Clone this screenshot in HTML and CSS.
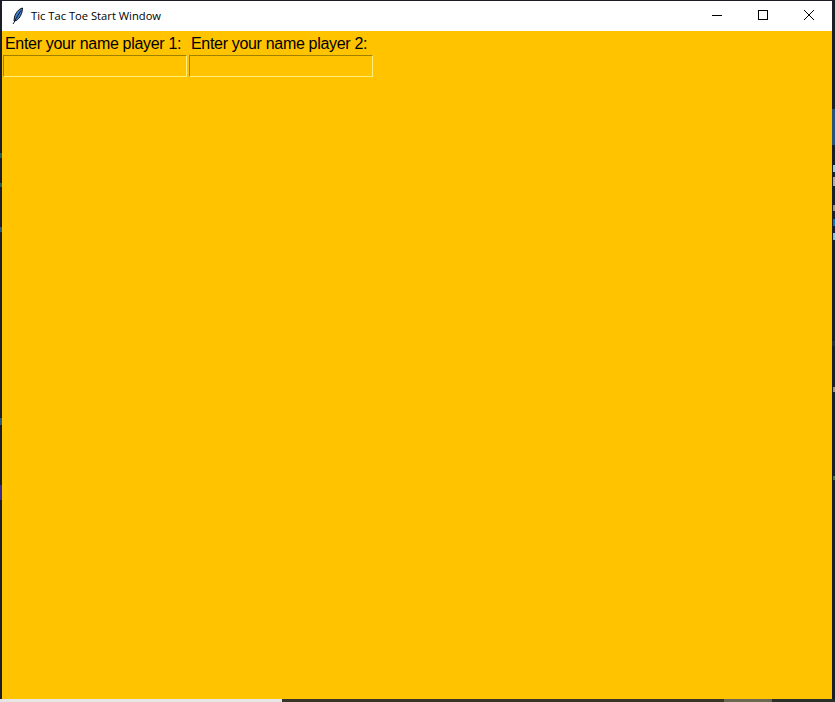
FILE: index.html
```html
<!DOCTYPE html>
<html lang="en">
<head>
  <meta charset="UTF-8">
  <title>Tic Tac Toe Start Window</title>
  <link rel="stylesheet" href="styles.css">
</head>
<body>

<div class="window">
  <div class="titlebar">
    <svg class="feather" width="16" height="18" viewBox="0 0 16 18">
      <path d="M12.5 1 C8.5 2 5.5 6 4.5 10 L4 14 L6.5 13.5 C10 11 12.5 6 12.5 1 Z" fill="#3f7fd0" stroke="#10131c" stroke-width="1"/>
      <path d="M11 3.5 C9 6.5 6.5 10.5 4 15.5 L3 17" fill="none" stroke="#10131c" stroke-width="1"/>
    </svg>
    <span class="title">Tic Tac Toe Start Window</span>
    <div class="controls">
      <svg class="control" width="46" height="30" viewBox="0 0 46 30">
        <path d="M18 14.5 H28" stroke="#000" stroke-width="1"/>
      </svg>
      <svg class="control" width="46" height="30" viewBox="0 0 46 30">
        <rect x="18.5" y="9.5" width="9" height="9" fill="none" stroke="#000" stroke-width="1"/>
      </svg>
      <svg class="control" width="46" height="30" viewBox="0 0 46 30">
        <path d="M18 9 L28 19 M28 9 L18 19" stroke="#000" stroke-width="1"/>
      </svg>
    </div>
  </div>

  <div class="content">
    <div class="field">
      <label class="name-label" for="player1">Enter your name player 1:</label>
      <input class="name-entry" id="player1" type="text">
    </div>
    <div class="field">
      <label class="name-label" for="player2">Enter your name player 2:</label>
      <input class="name-entry" id="player2" type="text">
    </div>
  </div>
</div>

<div class="taskstrip">
  <div class="strip-light"></div>
  <div class="strip-dark"></div>
  <div class="strip-thumb"></div>
  <div class="strip-end"></div>
</div>

</body>
</html>
```

FILE: styles.css
```css
html, body {
  height: 100%;
}
body {
  margin: 0;
  background-color: #1b1e26;
  /* bits of the desktop showing past the window edges */
  background-image:
    linear-gradient(#2d5278, #2d5278),
    linear-gradient(#9cc8e0, #9cc8e0),
    linear-gradient(#b8a8a0, #b8a8a0),
    linear-gradient(#a89878, #a89878),
    linear-gradient(#1d6fa8, #1d6fa8),
    linear-gradient(#8cc0d8, #8cc0d8),
    linear-gradient(#2a2d33, #2a2d33),
    linear-gradient(#a89878, #a89878),
    linear-gradient(#4a7a40, #4a7a40),
    linear-gradient(#1f5a5a, #1f5a5a),
    linear-gradient(#1f5a5a, #1f5a5a),
    linear-gradient(#28587c, #28587c),
    linear-gradient(#28587c, #28587c),
    linear-gradient(#3a2a90, #3a2a90);
  background-repeat: no-repeat;
  background-size:
    3px 36px, 2px 7px, 2px 9px, 2px 6px, 2px 7px, 2px 7px, 3px 5px,
    2px 5px, 2px 4px, 2px 5px, 2px 4px, 2px 5px, 2px 7px, 2px 15px;
  background-position:
    832px 109px, 833px 165px, 833px 177px, 833px 205px, 833px 219px, 833px 233px, 832px 341px,
    833px 387px, 833px 476px, 0 153px, 0 183px, 0 227px, 0 418px, 0 485px;
  display: flex;
  flex-direction: column;
  overflow: hidden;
}
.window {
  flex: 1;
  margin: 1px 3px 0 2px;
  display: flex;
  flex-direction: column;
  background: #ffc300;
}
.titlebar {
  height: 30px;
  background: #fff;
  display: flex;
  align-items: center;
  padding-left: 8px;
}
.feather {
  margin-right: 5px;
}
.title {
  font-family: "Open Sans", sans-serif;
  font-size: 11.2px;
  color: #000;
  padding-bottom: 2px;
}
.controls {
  margin-left: auto;
  display: flex;
}
.control {
  display: block;
}
.content {
  display: flex;
  align-items: flex-start;
  gap: 2px;
  padding: 2px 1px;
}
.field {
  width: 184px;
  display: flex;
  flex-direction: column;
}
.name-label {
  height: 22px;
  line-height: 22px;
  padding-left: 2px;
  white-space: nowrap;
  font-family: "Liberation Sans", Arial, sans-serif;
  font-size: 16px;
  letter-spacing: -0.32px;
  color: #000;
}
.name-entry {
  box-sizing: border-box;
  width: 184px;
  height: 22px;
  margin: 0;
  padding: 0;
  background: #ffc300;
  border: 1px solid;
  border-color: #a08000 #fff07a #fff07a #a08000;
  outline: none;
}
.taskstrip {
  height: 3px;
  display: flex;
}
.strip-light {
  width: 282px;
  background: #e6e6e6;
}
.strip-dark {
  width: 442px;
  background: #3a3626;
}
.strip-thumb {
  width: 48px;
  background: #6b6750;
}
.strip-end {
  flex: 1;
  background: #2a3028;
}
```
